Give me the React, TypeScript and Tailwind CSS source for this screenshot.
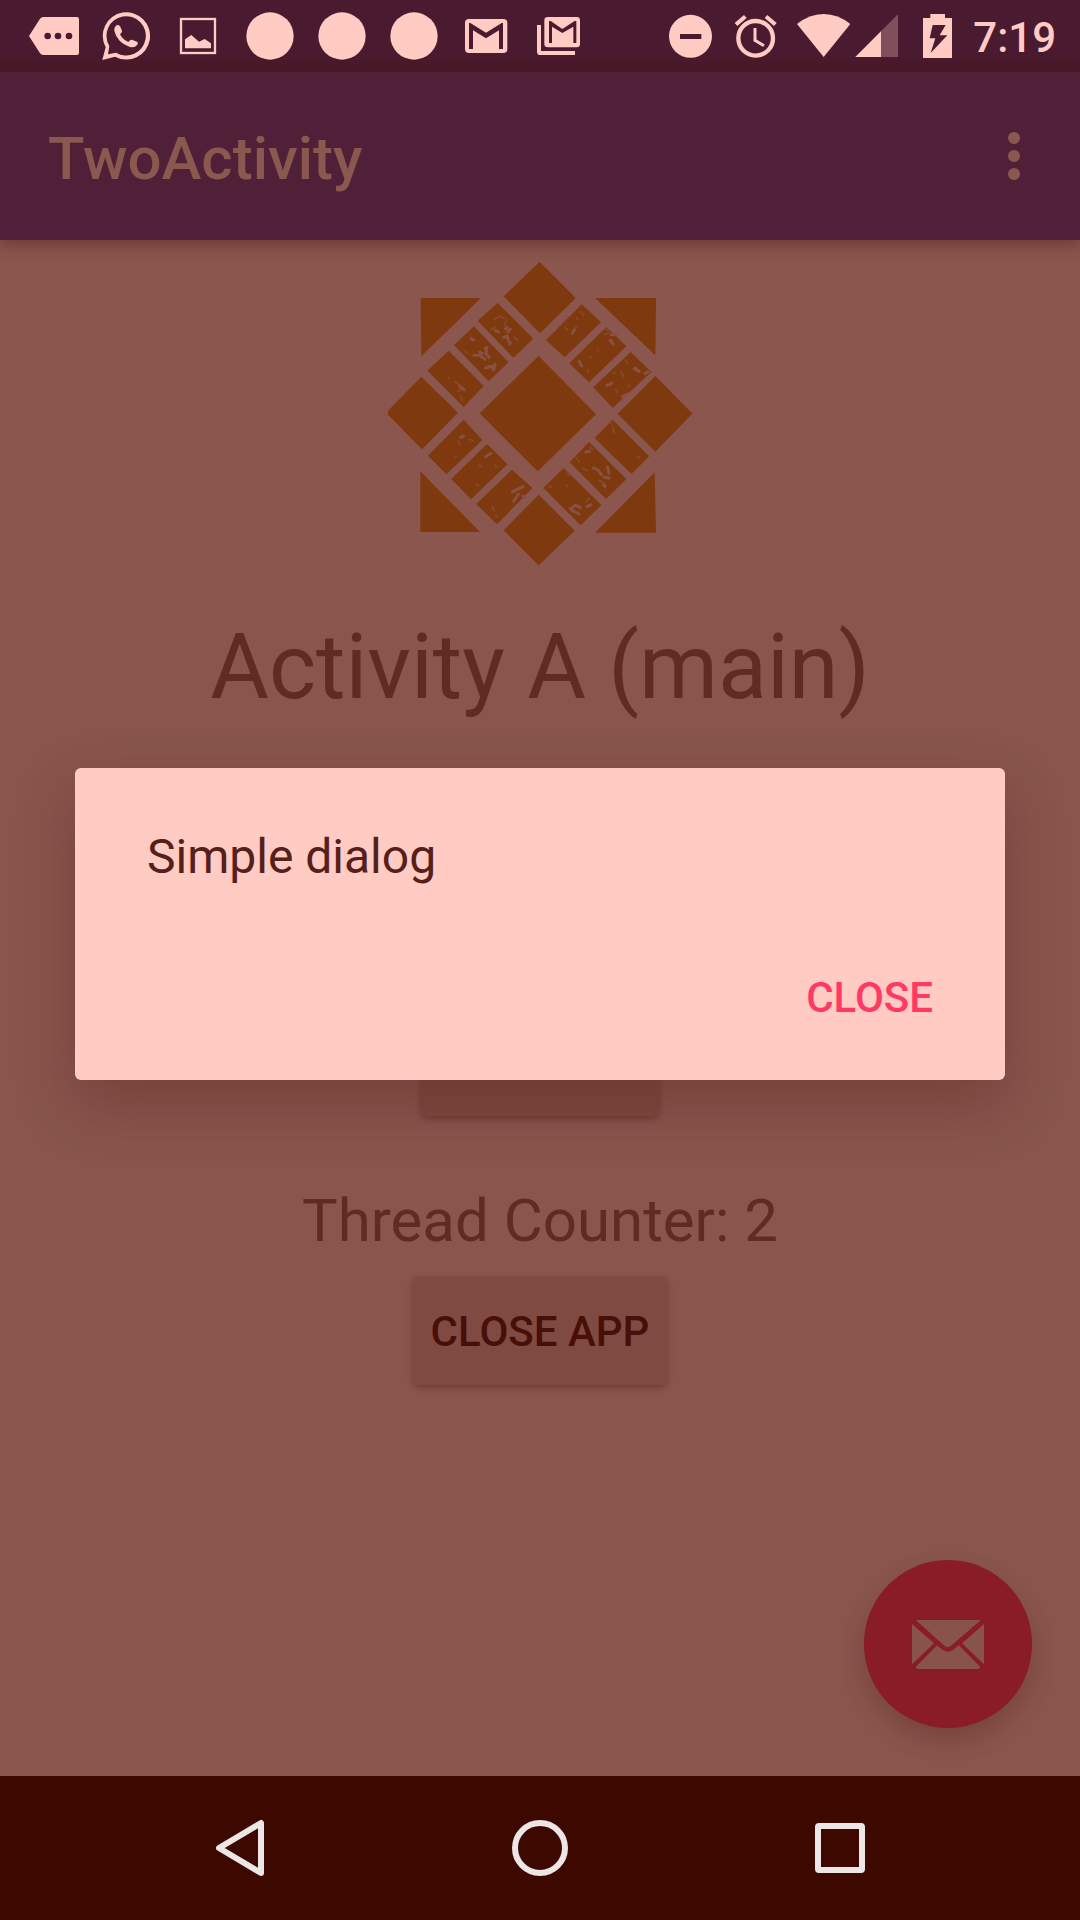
import type { ReactNode } from 'react';

function StatusGlyph({ box, className, children }: { box: string; className: string; children: ReactNode }) {
  return (
    <svg viewBox={box} className={`h-[72px] shrink-0 ${className}`} fill="currentColor" aria-hidden="true">
      {children}
    </svg>
  );
}

function NotificationIcons() {
  return (
    <div className="flex text-[#ffcbc3]">
      <StatusGlyph box="54 0 216 216" className="w-[72px]">
        <path
          fillRule="evenodd"
          d="M87 108L120 56Q124 51 130 51H231Q237 51 237 57V159Q237 165 231 165H130Q124 165 120 160ZM133 108a10 10 0 1 0 20 0a10 10 0 1 0-20 0M164 108a10 10 0 1 0 20 0a10 10 0 1 0-20 0M197 108a10 10 0 1 0 20 0a10 10 0 1 0-20 0"
        />
      </StatusGlyph>
      <StatusGlyph box="270 0 216 216" className="w-[72px]">
        <path
          fillRule="evenodd"
          d="M307 180L317 142A71 71 0 1 1 345 170ZM324 163L348 158A59 59 0 1 0 328 138Z"
        />
        <path d="M349 76Q357 72 361 80L366 92Q367 97 360 103Q368 119 385 126Q391 118 396 119L411 125Q416 128 412 134Q403 145 388 140Q352 128 343 93Q342 82 349 76Z" />
      </StatusGlyph>
      <StatusGlyph box="486 0 216 216" className="w-[72px]">
        <rect x="543" y="57" width="102" height="102" fill="none" stroke="currentColor" strokeWidth="7" />
        <path d="M555 145V118L574 105L597 125L614 117L633 130V145Z" />
      </StatusGlyph>
      {[0, 1, 2].map((n) => (
        <StatusGlyph key={n} box="0 0 216 216" className="w-[72px]">
          <circle cx="108" cy="108" r="71" />
        </StatusGlyph>
      ))}
      <StatusGlyph box="480 0 216 216" className="w-[72px]">
        <path
          fillRule="evenodd"
          d="M537 57H640Q652 57 652 69V147Q652 159 640 159H537Q525 159 525 147V69Q525 57 537 57ZM537 69V147H549V91L588 115L627 91V147H639V69H635L588 98L541 69Z"
        />
      </StatusGlyph>
      <StatusGlyph box="696 0 216 216" className="w-[72px]">
        <path
          fillRule="evenodd"
          d="M774 51H860Q870 51 870 61V132Q870 142 860 142H774Q763 142 763 132V61Q763 51 774 51ZM777 63V129H786V80L817 99L850 80V129H859V63H854L817 87L782 63Z"
        />
        <path d="M741 75H753V153H855V165H751Q741 165 741 155Z" />
      </StatusGlyph>
    </div>
  );
}

function SystemIcons() {
  return (
    <div className="flex text-[#ffcbc3]">
      <StatusGlyph box="75 0 183 216" className="w-[61px]">
        <path fillRule="evenodd" d="M87 109a64 64 0 1 0 129 0a64 64 0 1 0-129 0M120 102H184V117H120Z" />
      </StatusGlyph>
      <StatusGlyph box="258 0 192 216" className="w-16">
        <circle cx="347" cy="115" r="52" fill="none" stroke="currentColor" strokeWidth="13" />
        <path d="M284 69L312 45L320 54L292 78ZM410 69L382 45L374 54L402 78Z" />
        <path d="M345 84V121L372 137" fill="none" stroke="currentColor" strokeWidth="9" />
      </StatusGlyph>
      <StatusGlyph box="450 0 192 216" className="w-16">
        <path d="M471 72Q508 42 551 42Q594 42 631 72L551 171Z" />
      </StatusGlyph>
      <StatusGlyph box="642 0 180 216" className="w-[60px]">
        <path d="M646 171L774 43V171Z" opacity="0.3" />
        <path d="M646 171L723 94V171Z" />
      </StatusGlyph>
      <StatusGlyph box="822 0 153 216" className="w-[51px]">
        <path
          fillRule="evenodd"
          d="M871 42H915V54H936V174H849V54H871ZM878 75L869 115H886L872 159L922 106H899L917 75Z"
        />
      </StatusGlyph>
    </div>
  );
}

const TILES = [
  '508,65 616,174 509,280 400,169',
  '153,410 263,518 155,628 53,524 53,512',
  '855,408 966,521 855,635 742,521',
  '505,764 613,872 505,976 400,871',
  '505,348 677,523 502,694 328,520',
  '151,174 332,174 153,349',
  '674,174 857,174 855,346',
  '150,694 329,876 150,876',
  '853,697 857,878 674,878',
  '382,189 489,296 429,353 322,242',
  '311,259 414,367 355,424 251,315',
  '235,332 340,438 280,501 171,392',
  '634,193 692,247 583,352 527,300',
  '708,261 768,319 656,427 597,370',
  '781,336 843,396 727,504 669,442',
  '280,539 336,600 228,703 173,647',
  '350,612 411,673 302,778 243,717',
  '425,689 486,744 380,853 318,792',
  '727,539 836,649 783,702 673,594',
  '656,606 768,717 707,777 598,667',
  '580,684 693,795 631,856 519,744',
];

const FINE_SPECKS =
  'M372 238L388 229L402 235M362 270L374 262M408 238L402 256M432 292L440 300M284 334L290 340' +
  'M252 424L264 432L276 444L286 452M262 454L272 450M234 412L236 416M272 470L276 482' +
  'M632 216L640 226M584 262L592 270M620 234L622 238M604 282L612 268L618 260' +
  'M702 284L716 278M704 268L714 270M660 350L662 352M654 390L654 396M682 330L684 332' +
  'M766 362L772 370M752 396L760 410M796 380L804 394M736 448L740 456M730 400L736 398M774 436L778 440' +
  'M264 606L270 614M298 598L308 602M256 650L258 652M326 676L334 680M376 676L378 682M316 732L324 736' +
  'M366 800L372 812M376 826L380 830M728 562L732 578M800 648L808 654M720 548L724 552' +
  'M618 654L626 664M636 684L650 692M688 722L700 728M660 622L668 628M592 700L596 706M536 738L542 742M588 736L592 738M648 786L656 776';

const BOLD_SPECKS =
  'M376 272L384 276M406 266L410 262M412 276L420 268M400 292L410 288L414 302M418 312L420 308' +
  'M302 296L310 300M344 326L350 322L346 340L356 352M310 346L328 346L344 358M346 384L364 378L370 390L374 372M328 336L336 340' +
  'M268 440L280 448M606 280L612 270M722 284L738 282M720 300L728 312M626 364L634 378' +
  'M792 386L806 394M710 436L724 430M756 470L776 460M824 400L834 396M270 592L280 588M346 650L362 640' +
  'M426 756L440 748L458 740M444 762L430 784M458 768L464 772M646 636L658 634M670 684L682 690L694 704M712 682L716 700M702 712L716 714M700 734L704 740' +
  'M600 806L616 796L630 802M606 812L626 822M650 800L662 794';

function Logo() {
  return (
    <svg viewBox="53 63 912 912" className="size-[304px] bg-[#8a564e]" role="img" aria-label="Logo">
      {TILES.map((points) => (
        <polygon key={points} points={points} fill="#7e390e" />
      ))}
      <g fill="none" strokeLinecap="round" strokeLinejoin="round">
        <path d={FINE_SPECKS} stroke="#864828" strokeWidth="6" />
        <path d={BOLD_SPECKS} stroke="#8a5142" strokeWidth="9" />
      </g>
    </svg>
  );
}

export default function App() {
  return (
    <div className="flex min-h-screen flex-col bg-[#89554d] font-['Roboto',sans-serif]">
      <header className="flex h-[72px] items-center justify-between bg-linear-to-b from-[#4a1b30] from-70% to-[#471726] pr-6 pl-[18px]">
        <NotificationIcons />
        <div className="flex items-center gap-2">
          <SystemIcons />
          <time className="pt-1 text-[42px] leading-none font-medium text-[#ffcbc3]">7:19</time>
        </div>
      </header>

      <div className="relative flex grow flex-col overflow-hidden">
        <div className="z-10 flex h-[168px] items-center justify-between bg-[#501f38] pr-9 pl-12 shadow-[0_6px_12px_rgba(60,8,0,0.3)]">
          <h1 className="pt-1.5 text-[60px] leading-none font-medium text-[#8a584e]">TwoActivity</h1>
          <button type="button" aria-label="More options" className="flex w-[60px] justify-center py-6">
            <svg viewBox="0 0 12 48" className="h-12 w-3" fill="#8a584e" aria-hidden="true">
              <circle cx="6" cy="6" r="6" />
              <circle cx="6" cy="24" r="6" />
              <circle cx="6" cy="42" r="6" />
            </svg>
          </button>
        </div>

        <main className="flex grow flex-col items-center pt-[21px]">
          <Logo />
          <h2 className="mt-[49px] text-[90px] leading-[108px] text-[#612b24]">Activity A (main)</h2>
          <button
            type="button"
            aria-label="Open dialog"
            className="mt-[286px] h-[108px] w-[238px] rounded-md bg-[#7f4a41] shadow-[0_3px_6px_rgba(60,8,0,0.3)]"
          />
          <p className="mt-[69px] text-[60px] leading-[72px] text-[#612b24]">Thread Counter: 2</p>
          <button
            type="button"
            className="mt-[19px] h-[109px] rounded-md bg-[#7f4a41] px-[18px] pt-0.5 text-[42px] leading-none font-medium text-[#470f08] shadow-[0_3px_6px_rgba(60,8,0,0.3)]"
          >
            CLOSE APP
          </button>
        </main>

        <button
          type="button"
          aria-label="Send email"
          className="absolute right-12 bottom-12 size-[168px] rounded-full bg-[#891c26] shadow-[0_12px_24px_rgba(60,8,0,0.22)]"
        >
          <svg viewBox="72 90 504 504" className="size-full" fill="#87534b" aria-hidden="true">
            <path d="M227 270H423L332 348Q323 355 314 348Z" />
            <path d="M216 282L282 340L216 403Z" />
            <path d="M432 282L366 340L432 403Z" />
            <path d="M291 346L309 360Q323 370 338 360L357 346L421 411Q419 417 413 417H234Q228 417 227 411Z" />
          </svg>
        </button>

        <div className="absolute inset-0 z-20 flex items-center px-[75px]">
          <div
            role="dialog"
            aria-modal="true"
            aria-labelledby="dialog-message"
            className="flex w-full flex-col rounded-md bg-[#ffcbc3] px-[72px] pt-[61px] pb-7 shadow-[0_24px_60px_rgba(60,8,0,0.25)]"
          >
            <p id="dialog-message" className="text-[48px] leading-[56px] text-[#55201a]">
              Simple dialog
            </p>
            <button
              type="button"
              className="mt-[59px] h-[108px] self-end text-[42px] leading-none font-medium text-[#ff3864]"
            >
              CLOSE
            </button>
          </div>
        </div>
      </div>

      <nav className="flex h-36 bg-[#3c0800] px-[90px] text-[#ede6e6]">
        <button type="button" aria-label="Back" className="flex flex-1 items-center justify-center">
          <svg viewBox="0 0 60 60" className="size-[60px]" fill="none" stroke="currentColor" aria-hidden="true">
            <path d="M51 5V55L9 30Z" strokeWidth="6" strokeLinejoin="round" />
          </svg>
        </button>
        <button type="button" aria-label="Home" className="flex flex-1 items-center justify-center">
          <svg viewBox="0 0 60 60" className="size-[60px]" fill="none" stroke="currentColor" aria-hidden="true">
            <circle cx="30" cy="30" r="25" strokeWidth="6" />
          </svg>
        </button>
        <button type="button" aria-label="Recent apps" className="flex flex-1 items-center justify-center">
          <svg viewBox="0 0 60 60" className="size-[60px]" fill="none" stroke="currentColor" aria-hidden="true">
            <rect x="8" y="8" width="44" height="44" rx="1" strokeWidth="6" strokeLinejoin="round" />
          </svg>
        </button>
      </nav>
    </div>
  );
}
